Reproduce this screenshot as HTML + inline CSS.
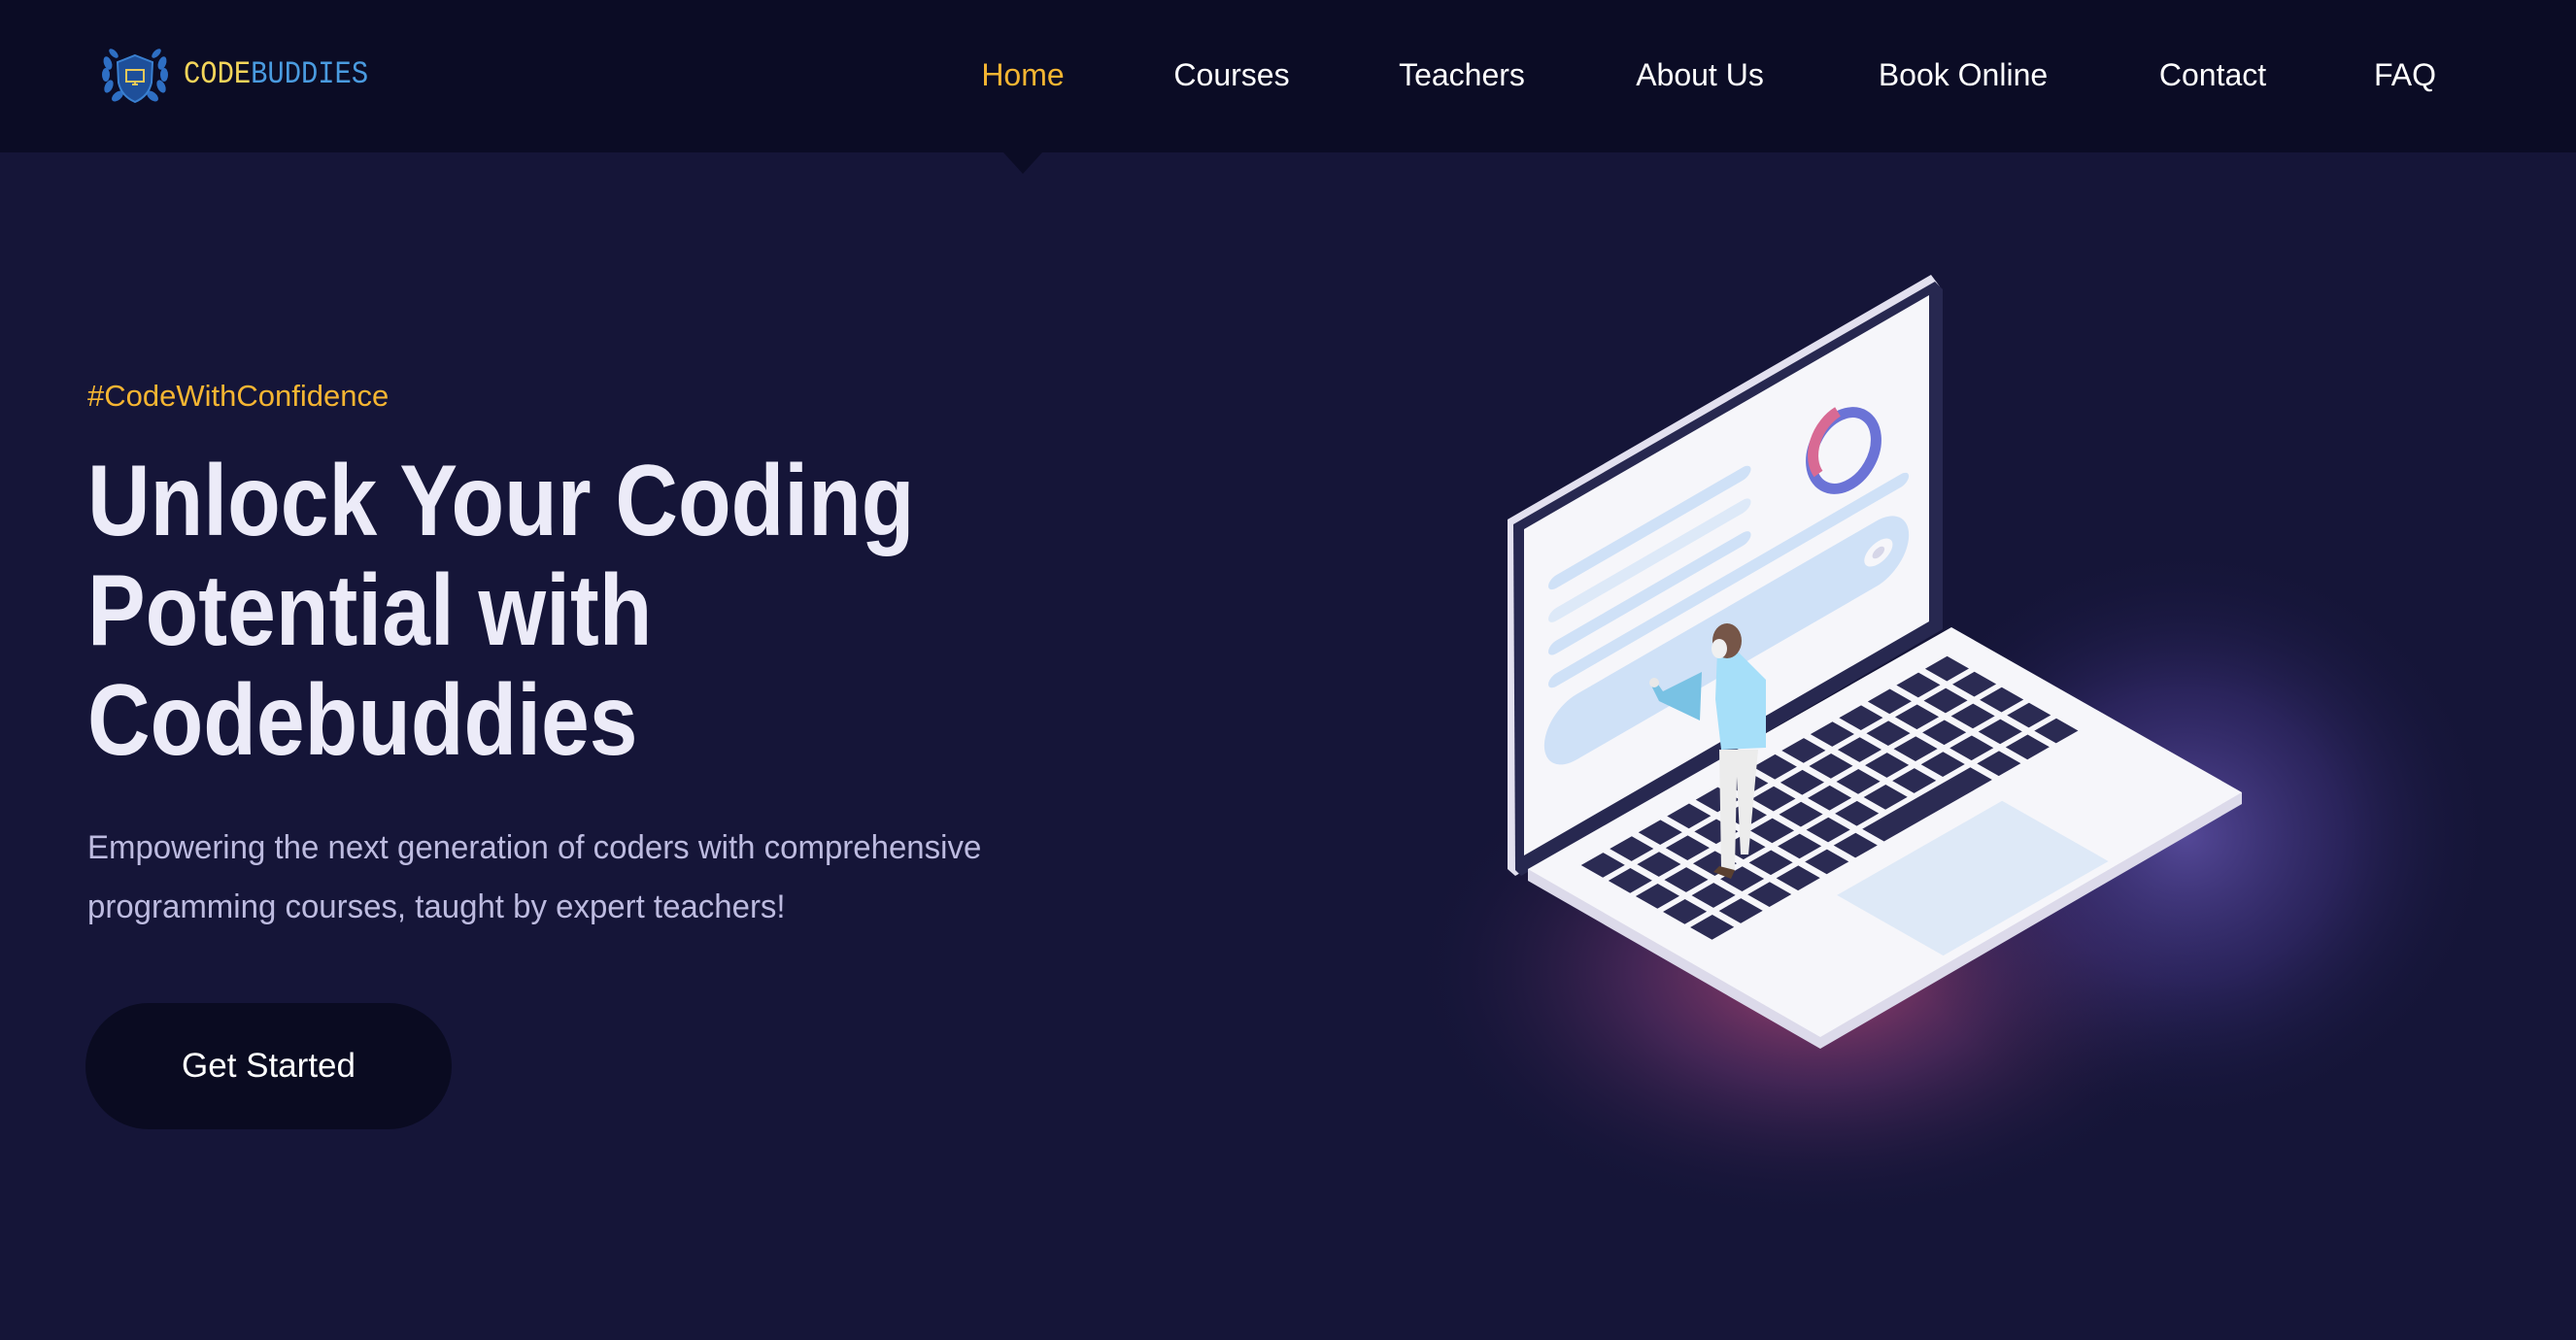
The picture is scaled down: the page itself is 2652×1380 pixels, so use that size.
<!DOCTYPE html>
<html><head><meta charset="utf-8"><style>
*{margin:0;padding:0;box-sizing:border-box}
body{width:2652px;height:1380px;background:#151538;font-family:"Liberation Sans",sans-serif;overflow:hidden;position:relative}
.nav{position:absolute;left:0;top:0;width:2652px;height:157px;background:#0b0c25}
.tri{position:absolute;left:1033px;top:157px;width:0;height:0;border-left:20px solid transparent;border-right:20px solid transparent;border-top:22px solid #0b0c25}
.logo{position:absolute;left:189px;top:58px;font-family:"Liberation Mono",monospace;font-size:32px;transform:scaleX(0.9);transform-origin:left}
.lk{position:absolute;top:59px;color:#fff;font-size:32px;text-decoration:none;transform:translateX(-50%);white-space:nowrap}
.tag{position:absolute;left:90px;top:390px;color:#f5b532;font-size:31px}
h1{position:absolute;left:90px;top:460px;color:#ecebf8;font-size:104px;font-weight:bold;line-height:113px;transform:scaleX(0.86);transform-origin:left top;white-space:nowrap}
p{position:absolute;left:90px;top:843px;color:#bdbbe0;font-size:34px;line-height:61px;width:1100px;transform:scaleX(0.97);transform-origin:left top}
.btn{position:absolute;left:88px;top:1033px;width:377px;height:130px;border-radius:65px;background:#0a0b21;color:#fff;font-size:35px;display:flex;align-items:center;justify-content:center}
</style></head><body>
<div class="nav"></div><div class="tri"></div>
<svg style="position:absolute;left:103px;top:45px" width="72" height="66" viewBox="0 0 72 66">
<g fill="#2e6fc4">
<ellipse cx="8" cy="20" rx="4" ry="7" transform="rotate(-20 8 20)"/><ellipse cx="6" cy="32" rx="4" ry="7"/><ellipse cx="9" cy="44" rx="4" ry="7" transform="rotate(25 9 44)"/><ellipse cx="18" cy="54" rx="4" ry="7" transform="rotate(50 18 54)"/><ellipse cx="14" cy="10" rx="3" ry="6" transform="rotate(-45 14 10)"/>
<ellipse cx="64" cy="20" rx="4" ry="7" transform="rotate(20 64 20)"/><ellipse cx="66" cy="32" rx="4" ry="7"/><ellipse cx="63" cy="44" rx="4" ry="7" transform="rotate(-25 63 44)"/><ellipse cx="54" cy="54" rx="4" ry="7" transform="rotate(-50 54 54)"/><ellipse cx="58" cy="10" rx="3" ry="6" transform="rotate(45 58 10)"/>
</g>
<path d="M36 12 L54 19 L53 40 Q50 54 36 60 Q22 54 19 40 L18 19 Z" fill="#1e4f9a" stroke="#3a80d0" stroke-width="2"/>
<rect x="27" y="27" width="18" height="12" fill="none" stroke="#e8c85a" stroke-width="2"/><path d="M33 42h6M36 39v3" stroke="#e8c85a" stroke-width="2"/>
</svg>
<div class="logo"><span style="color:#f4d55a">CODE</span><span style="color:#4a9be0">BUDDIES</span></div>
<a class="lk" style="left:1053px;color:#f4b532">Home</a>
<a class="lk" style="left:1268px">Courses</a><a class="lk" style="left:1505px">Teachers</a><a class="lk" style="left:1750px">About Us</a><a class="lk" style="left:2021px">Book Online</a><a class="lk" style="left:2278px">Contact</a><a class="lk" style="left:2476px">FAQ</a>
<div class="tag">#CodeWithConfidence</div>
<h1>Unlock Your Coding<br>Potential with<br>Codebuddies</h1>
<p>Empowering the next generation of coders with comprehensive programming courses, taught by expert teachers!</p>
<div class="btn">Get Started</div>
<svg style="position:absolute;left:0;top:0" width="2652" height="1380">
<defs>
<radialGradient id="g1" cx="0.5" cy="0.5" r="0.5"><stop offset="0" stop-color="#c84d7a" stop-opacity="0.8"/><stop offset="0.45" stop-color="#7a3a78" stop-opacity="0.45"/><stop offset="1" stop-color="#151538" stop-opacity="0"/></radialGradient>
<radialGradient id="g2" cx="0.5" cy="0.5" r="0.5"><stop offset="0" stop-color="#6a5ab8" stop-opacity="0.75"/><stop offset="0.5" stop-color="#4a3a90" stop-opacity="0.4"/><stop offset="1" stop-color="#151538" stop-opacity="0"/></radialGradient>
</defs>
<ellipse cx="1870" cy="1000" rx="420" ry="260" fill="url(#g1)"/>
<ellipse cx="2250" cy="860" rx="320" ry="300" fill="url(#g2)"/>
<path d="M1552 535 L1988 283 L1997 295 L1997 648 L1560 902 L1552 895 Z" fill="#e2e0ef"/>
<path d="M1558 540 L1992 290 L2000 298 L2000 648 L1566 902 L1560 896 Z" fill="#272850"/>
<path d="M1569 545 L1986 304 L1986 640 L1569 881 Z" fill="#f6f6fa"/>
<g transform="matrix(417,-241,0,-337,1569,881)">
<rect x="0.06" y="0.76" width="0.5" height="0.04" rx="0.02" ry="0.02" fill="#cfe1f7"/>
<rect x="0.06" y="0.66" width="0.5" height="0.04" rx="0.02" ry="0.02" fill="#dde9f8"/>
<rect x="0.06" y="0.56" width="0.5" height="0.04" rx="0.02" ry="0.02" fill="#cfe1f7"/>
<rect x="0.06" y="0.46" width="0.89" height="0.04" rx="0.02" ry="0.02" fill="#cfe1f7"/>
<rect x="0.05" y="0.2" width="0.9" height="0.2" rx="0.08" ry="0.1" fill="#cfe1f7"/>
<circle cx="0.875" cy="0.3" r="0.035" fill="#f6f6fa"/><circle cx="0.875" cy="0.3" r="0.015" fill="#d6d6e8"/>
</g>
<ellipse cx="1898" cy="464" rx="30" ry="42" transform="rotate(30 1898 464)" fill="none" stroke="#6b73d6" stroke-width="11"/>
<path d="M1872 488 A30 42 30 0 1 1892 424" fill="none" stroke="#d86a94" stroke-width="11"/>
<path d="M1573 895 L1573 907 L1874 1080 L2308 828 L2308 816 Z" fill="#dcdaea"/>
<path d="M2009 646 L2308 816 L1874 1068 L1573 895 Z" fill="#f6f6fa"/>
<g transform="matrix(-436,249,299,170,2009,646)">
<path d="M0.30 0.612 L0.69 0.612 L0.69 0.978 L0.30 0.978 Z" fill="#dee9f7"/>
</g>
<g id="keys" transform="matrix(-436,249,299,170,2009,646)" fill="#2b2b53"></g>
<path d="M1752 692 L1712 712 L1705 702 L1700 706 L1708 722 L1750 742 Z" fill="#79c2e4"/>
<ellipse cx="1703" cy="703" rx="5" ry="5" fill="#e8e8e8"/>
<path d="M1768 670 L1790 672 L1818 700 L1818 770 L1772 772 L1766 720 Z" fill="#a6dff9"/>
<path d="M1770 772 L1810 772 L1800 880 L1792 880 L1788 800 L1786 895 L1772 895 Z" fill="#ececec"/>
<path d="M1770 892 L1786 896 L1782 905 L1764 898 Z" fill="#5a4030"/>
<ellipse cx="1778" cy="660" rx="15" ry="18" fill="#765648"/>
<ellipse cx="1770" cy="668" rx="8" ry="10" fill="#f0f0f0"/>
</svg>
<script>
var g=document.getElementById('keys'),s='';
for(var i=0;i<13;i++)for(var j=0;j<5;j++){
var x=0.065+i*0.0677,y=0.08+j*0.094;
if(j==4&&i>=3&&i<=6){if(i==3)s+='<path d="M'+x+' '+y+' h'+(0.0677*3+0.052)+' v0.075 h-'+(0.0677*3+0.052)+' Z"/>';continue;}
s+='<path d="M'+x+' '+y+' h0.052 v0.075 h-0.052 Z"/>';}
g.innerHTML=s;
</script>
</body></html>
